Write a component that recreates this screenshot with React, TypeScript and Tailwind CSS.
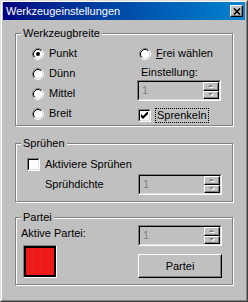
import React from "react";

const Radio = ({ checked }: { checked?: boolean }) => (
  <svg width="12" height="12" viewBox="0 0 12 12" className="shrink-0">
    <circle cx="6" cy="6" r="4.5" fill="#fff" />
    <path d="M2.11 9.89A5.5 5.5 0 0 1 9.89 2.11" fill="none" stroke="#808080" />
    <path d="M9.89 2.11A5.5 5.5 0 0 1 2.11 9.89" fill="none" stroke="#fff" />
    <path d="M2.82 9.18A4.5 4.5 0 0 1 9.18 2.82" fill="none" stroke="#000" />
    <path d="M9.18 2.82A4.5 4.5 0 0 1 2.82 9.18" fill="none" stroke="#dfdfdf" />
    {checked && <circle cx="6" cy="6" r="2" fill="#000" />}
  </svg>
);

const Check = ({ checked }: { checked?: boolean }) => (
  <div className="w-[13px] h-[13px] shrink-0 border border-t-[#808080] border-l-[#808080] border-r-white border-b-white">
    <div className="w-full h-full flex items-center justify-center bg-white border border-t-black border-l-black border-r-[#dfdfdf] border-b-[#dfdfdf]">
      {checked && (
        <svg width="7" height="7" viewBox="0 0 7 7">
          <path d="M0 2L2 4L7 -1V2L2 7L0 5Z" fill="#000" />
        </svg>
      )}
    </div>
  </div>
);

const SpinBtn = ({ up }: { up?: boolean }) => (
  <div className="flex-1 flex items-center justify-center bg-[#c0c0c0] border border-t-white border-l-white border-r-black border-b-black shadow-[inset_-1px_-1px_0_#808080]">
    <svg width="6" height="4" viewBox="0 0 6 4">
      {up ? (
        <>
          <path d="M1 4L3.5 1.5L6 4Z" fill="#fff" />
          <path d="M0 3L2.5 0.5L5 3Z" fill="#808080" />
        </>
      ) : (
        <>
          <path d="M1 1L3.5 3.5L6 1Z" fill="#fff" />
          <path d="M0 0L2.5 2.5L5 0Z" fill="#808080" />
        </>
      )}
    </svg>
  </div>
);

const Spinner = () => (
  <div className="w-[84px] h-[21px] border border-t-[#808080] border-l-[#808080] border-r-white border-b-white">
    <div className="flex h-full border border-t-black border-l-black border-r-[#dfdfdf] border-b-[#dfdfdf]">
      <span className="flex-1 pl-[3px] leading-[17px] text-[#808080]">1</span>
      <div className="flex flex-col w-[16px]">
        <SpinBtn up />
        <SpinBtn />
      </div>
    </div>
  </div>
);

const Group = ({
  title,
  className,
  children,
}: {
  title: string;
  className: string;
  children: React.ReactNode;
}) => (
  <div
    className={`relative ml-[12px] w-[218px] border border-[#808080] shadow-[inset_1px_1px_0_#fff,1px_1px_0_#fff] ${className}`}
  >
    <span className="absolute left-[5px] -top-[7px] px-[2px] bg-[#c0c0c0] leading-[13px]">
      {title}
    </span>
    {children}
  </div>
);

export default function App() {
  return (
    <div className="w-[248px] h-[302px] flex bg-[#c0c0c0] text-[11px] leading-[13px] text-black font-['Liberation_Sans',Arial,sans-serif] border border-t-[#dfdfdf] border-l-[#dfdfdf] border-r-[#404040] border-b-[#404040]">
      <div className="flex-1 flex flex-col px-[1px] border border-t-white border-l-white border-r-[#808080] border-b-[#808080]">
        <div className="h-[18px] flex items-center justify-between bg-gradient-to-r from-[#000080] to-[#1084d0] pl-[3px] pr-[2px]">
          <span className="text-white">Werkzeugeinstellungen</span>
          <div className="w-[13px] h-[12px] bg-[#c0c0c0] flex items-center justify-center border border-t-white border-l-white border-r-black border-b-black shadow-[inset_-1px_-1px_0_#808080]">
            <svg width="8" height="7" viewBox="0 0 8 7">
              <path d="M1 0.5L7 6.5M7 0.5L1 6.5" stroke="#000" strokeWidth="1.7" />
            </svg>
          </div>
        </div>

        <Group title="Werkzeugbreite" className="mt-[13px] h-[93px]">
          <div className="flex pl-[16px] pt-[13px]">
            <div className="w-[105px] flex flex-col gap-[7px]">
              {["Punkt", "Dünn", "Mittel", "Breit"].map((label, i) => (
                <div key={label} className="h-[13px] flex items-center gap-[5px]">
                  <Radio checked={i === 0} />
                  <span>{label}</span>
                </div>
              ))}
            </div>
            <div className="flex flex-col">
              <div className="h-[13px] flex items-center gap-[5px] ml-[2px]">
                <Radio />
                <span>
                  <span className="underline">F</span>rei wählen
                </span>
              </div>
              <span className="mt-[6px] ml-[4px]">Einstellung:</span>
              <div className="mt-[1px]">
                <Spinner />
              </div>
              <div className="mt-[7px] ml-[1px] flex items-center gap-[4px]">
                <Check checked />
                <span className="px-[1px] border border-dotted border-black leading-[13px]">
                  Sprenkeln
                </span>
              </div>
            </div>
          </div>
        </Group>

        <Group title="Sprühen" className="mt-[17px] h-[59px]">
          <div className="flex flex-col pl-[11px] pt-[14px]">
            <div className="flex items-center gap-[5px]">
              <Check />
              <span>Aktiviere Sprühen</span>
            </div>
            <div className="mt-[3px] flex items-center">
              <span className="w-[111px] pl-[18px]">Sprühdichte</span>
              <Spinner />
            </div>
          </div>
        </Group>

        <Group title="Partei" className="mt-[15px] h-[68px]">
          <div className="flex pl-[5px] pt-[7px]">
            <div className="w-[117px] flex flex-col">
              <span className="mt-[2px]">Aktive Partei:</span>
              <div className="mt-[5px] ml-[2px] w-[34px] h-[33px] border border-t-[#808080] border-l-[#808080] border-r-white border-b-white">
                <div className="w-full h-full border-2 border-black">
                  <svg width="28" height="27" viewBox="0 0 28 27" className="block">
                    <rect width="28" height="27" fill="#ee1a1a" />
                    {[5, 13, 21].map((y) =>
                      [6, 14, 22].map((x) => (
                        <rect key={`${x}-${y}`} x={x} y={y} width="1" height="1" fill="#a07070" />
                      ))
                    )}
                  </svg>
                </div>
              </div>
            </div>
            <div className="flex flex-col">
              <Spinner />
              <button className="mt-[8px] w-[84px] h-[24px] bg-[#c0c0c0] border border-t-white border-l-white border-r-black border-b-black shadow-[inset_-1px_-1px_0_#808080]">
                Partei
              </button>
            </div>
          </div>
        </Group>
      </div>
    </div>
  );
}
